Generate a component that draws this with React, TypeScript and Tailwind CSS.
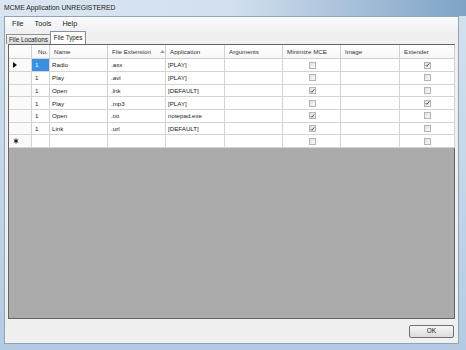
const rows = [
  { no: "1", name: "Radio", ext: ".asx", app: "[PLAY]", min: false, extd: true },
  { no: "1", name: "Play", ext: ".avi", app: "[PLAY]", min: false, extd: false },
  { no: "1", name: "Open", ext: ".lnk", app: "[DEFAULT]", min: true, extd: false },
  { no: "1", name: "Play", ext: ".mp3", app: "[PLAY]", min: false, extd: true },
  { no: "1", name: "Open", ext: ".txt", app: "notepad.exe", min: true, extd: false },
  { no: "1", name: "Link", ext: ".url", app: "[DEFAULT]", min: true, extd: false },
];

const cols = "grid grid-cols-[23px_18px_58px_58px_59px_58px_58px_59px_55px]";

function Check({ on }: { on: boolean }) {
  return (
    <div className="w-[7px] h-[7px] border border-[#b4b4b4] bg-gradient-to-br from-[#e2e2e2] to-[#fafafa] flex items-center justify-center">
      {on && (
        <svg width="6" height="6" viewBox="0 0 6 6">
          <path d="M0.8 3.1 L2.3 4.6 L5.2 1" stroke="#2a3f6a" strokeWidth="1.1" fill="none" />
        </svg>
      )}
    </div>
  );
}

function Cell({ children, className = "" }: { children?: React.ReactNode; className?: string }) {
  return (
    <div className={"h-[12.7px] border-r border-b border-[#d4d4d4] flex items-center pl-[2px] overflow-hidden whitespace-nowrap " + className}>
      {children}
    </div>
  );
}

export default function App() {
  return (
    <div
      className="w-[466px] h-[350px] bg-gradient-to-b from-[#d4e2ef] to-[#b3cbe2] flex flex-col text-[#1b1b1b] overflow-hidden"
      style={{ fontFamily: '"Liberation Sans", Arial, sans-serif' }}
    >
      {/* title bar */}
      <div className="h-[16px] flex items-center pl-[4px] text-[6.8px] bg-gradient-to-r from-[#dbe6f1] via-[#d2e0ee] to-[#7ea3c6]">
        MCME Application UNREGISTERED
      </div>

      <div className="flex-1 ml-[4px] mr-[7px] mb-[6px] bg-[#f0f0f0] border border-[#8ea3b8] flex flex-col">
        {/* menu */}
        <div className="h-[14px] flex items-center gap-[11px] pl-[7px] text-[7.2px] bg-gradient-to-b from-[#fbfcfd] to-[#eef0f3]">
          <span>File</span>
          <span>Tools</span>
          <span>Help</span>
        </div>

        {/* tabs */}
        <div className="h-[13px] flex items-end pl-[1px] text-[6.3px]">
          <div className="h-[10px] px-[2px] flex items-center border border-b-0 border-[#8c8f98] bg-gradient-to-b from-[#f4f4f4] to-[#dcdcdc] rounded-t-[1px]">
            File Locations
          </div>
          <div className="h-[13px] px-[3px] -ml-[1px] flex items-center border border-b-0 border-[#8c8f98] bg-white rounded-t-[1px]">
            File Types
          </div>
        </div>

        {/* grid */}
        <div className="flex-1 ml-[3px] mr-[3px] border border-[#646464] bg-[#ababab] flex flex-col text-[6.2px]">
          <div className="bg-white">
            <div className={cols + " h-[14.3px] text-[#333]"}>
              {["", "No.", "Name", "File Extension", "Application", "Arguments", "Minimize MCE", "Image", "Extender"].map((h, i) => (
                <div
                  key={i}
                  className={
                    "border-r border-b border-[#d0d0d0] flex items-center whitespace-nowrap bg-gradient-to-b from-white to-[#f6f7f9] " +
                    (i === 1 ? "pl-[6px]" : "pl-[4px]")
                  }
                >
                  {h}
                  {i === 3 && (
                    <svg className="ml-[9px]" width="5" height="3" viewBox="0 0 5 3">
                      <path d="M0 3 L2.5 0 L5 3 Z" fill="#a0a0a0" />
                    </svg>
                  )}
                </div>
              ))}
            </div>
            {rows.map((r, idx) => (
              <div key={idx} className={cols}>
                <Cell className="bg-[#fafafa] justify-start pl-[4px]">
                  {idx === 0 && (
                    <svg width="4" height="6" viewBox="0 0 4 6">
                      <path d="M0 0 L4 3 L0 6 Z" fill="#111" />
                    </svg>
                  )}
                </Cell>
                <Cell className={idx === 0 ? "bg-[#3b8fe3] text-white pl-[3px]" : "pl-[3px]"}>{r.no}</Cell>
                <Cell>{r.name}</Cell>
                <Cell className="pl-[3px]">{r.ext}</Cell>
                <Cell>{r.app}</Cell>
                <Cell />
                <Cell className="justify-center pl-0 pr-[1px]">
                  <Check on={r.min} />
                </Cell>
                <Cell />
                <Cell className="justify-center pl-0 pr-[2px]">
                  <Check on={r.extd} />
                </Cell>
              </div>
            ))}
            <div className={cols}>
              <Cell className="bg-[#fafafa] pl-[4px]">
                <svg width="6" height="6" viewBox="0 0 6 6">
                  <path d="M3 0.5 V5.5 M0.8 1.7 L5.2 4.3 M0.8 4.3 L5.2 1.7" stroke="#111" strokeWidth="1" />
                </svg>
              </Cell>
              <Cell />
              <Cell />
              <Cell />
              <Cell />
              <Cell />
              <Cell className="justify-center pl-0 pr-[1px]">
                <Check on={false} />
              </Cell>
              <Cell />
              <Cell className="justify-center pl-0 pr-[2px]">
                <Check on={false} />
              </Cell>
            </div>
          </div>
        </div>

        {/* bottom */}
        <div className="h-[24px] flex items-center justify-end pr-[4px]">
          <div className="w-[45px] h-[13px] border border-[#707070] rounded-[2px] bg-gradient-to-b from-[#f6f6f6] to-[#dcdcdc] flex items-center justify-center text-[6.5px]">
            OK
          </div>
        </div>
      </div>
    </div>
  );
}
